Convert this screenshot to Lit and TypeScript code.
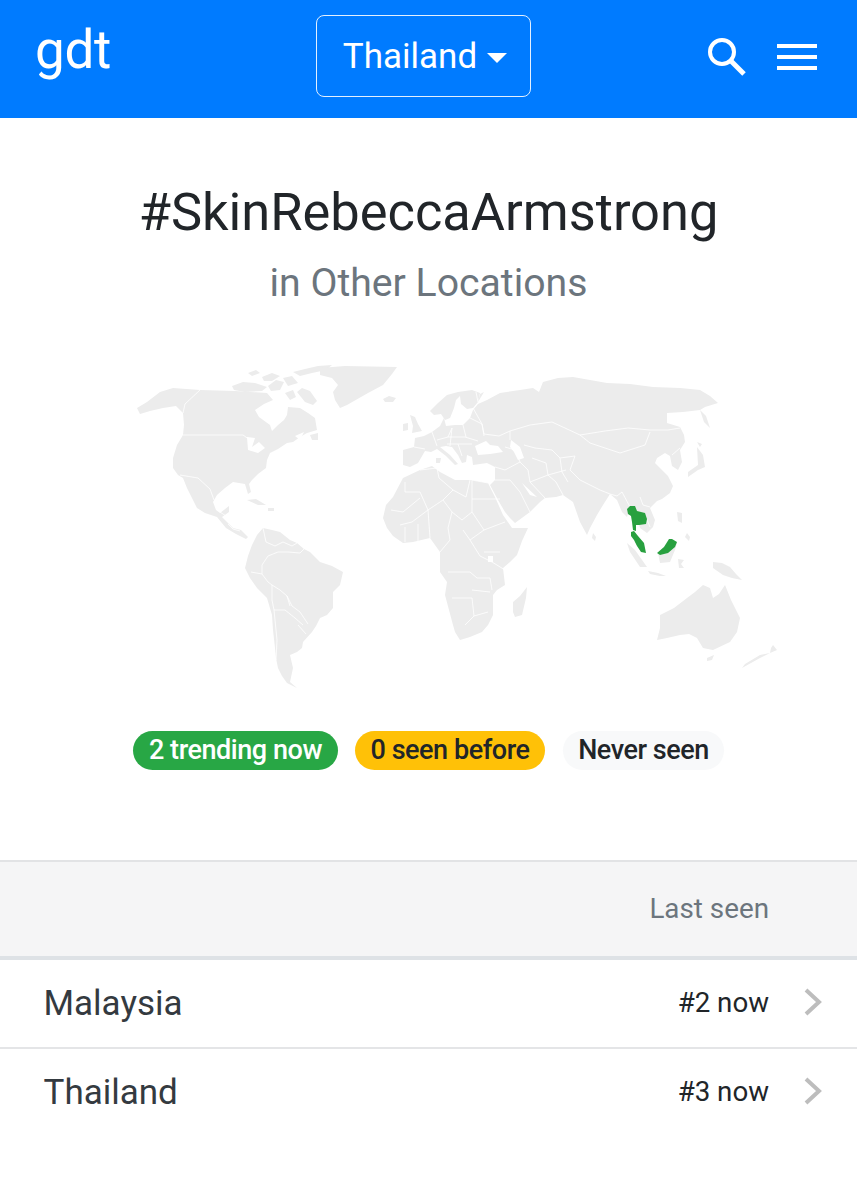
import { LitElement, html, css, svg } from "lit";
import { customElement } from "lit/decorators.js";

const LAND: string[] = [
  // North America
  "137,408 147,402 160,392 173,388 200,390 235,391 267,393 273,400 264,404 255,410 259,417 270,425 272,431 278,425 284,420 287,415 288,407 300,408 308,413 315,418 317,430 307,433 300,437 293,442 287,443 278,449 270,453 267,460 266,468 258,474 252,480 249,484 251,492 248,494 245,484 233,482 225,488 217,495 213,502 216,510 220,513 229,506 229,512 222,517 229,524 233,528 241,530 248,537 246,539 236,534 226,528 217,517 205,513 197,508 192,498 187,488 183,478 178,475 173,468 173,458 177,445 183,435 184,425 183,413 176,406 163,408 150,411 140,414",
  // Arctic islands
  "232,386 243,382 255,383 267,387 262,391 245,392 234,390",
  "268,386 276,380 284,382 280,390 271,391",
  "297,392 302,388 310,391 317,401 313,405 305,402",
  "285,393 293,390 296,397 290,400",
  "262,377 272,373 280,376 272,381 264,381",
  "283,378 292,376 298,383 288,386",
  "293,372 305,369 318,366 332,365 326,370 312,373 300,376",
  "248,373 256,370 260,373 252,376",
  // Greenland
  "320,368 345,366 397,367 392,374 383,385 368,393 347,405 340,408 335,400 333,392 338,385 332,378 320,375",
  // Newfoundland and Caribbean
  "310,435 318,433 318,440 312,440",
  "247,500 256,499 266,505 258,505",
  "268,508 274,508 274,511 268,511",
  // South America
  "252,545 257,535 263,528 272,530 280,532 290,540 297,543 304,549 310,552 320,562 332,566 343,572 340,585 333,592 333,608 327,615 320,618 316,626 312,632 303,642 302,648 297,652 290,655 293,668 290,682 297,688 287,683 282,676 278,668 276,658 275,648 273,630 272,615 267,598 257,588 250,578 245,568 248,556",
  // Africa
  "383,518 386,505 393,497 403,478 420,470 432,466 440,472 455,480 472,480 488,483 495,497 503,515 512,528 528,528 522,541 517,555 510,562 503,568 505,585 497,590 493,595 493,615 488,625 482,632 470,637 460,640 455,632 453,625 449,610 445,595 447,582 440,572 440,552 430,538 413,542 403,543 393,536 387,528",
  // Europe & Asia
  "403,450 414,447 415,438 424,436 432,432 440,426 444,418 446,426 455,425 463,425 470,418 473,410 478,404 487,400 500,393 520,390 533,388 539,392 543,382 558,378 573,377 590,380 607,383 630,384 653,387 680,388 700,390 710,396 718,403 705,407 700,410 683,412 667,413 667,423 680,427 684,435 685,442 680,450 682,462 678,470 672,466 670,456 665,453 657,458 655,463 662,470 668,476 673,486 670,493 662,499 657,501 650,508 655,520 653,527 647,533 640,528 636,514 630,507 627,517 622,512 617,500 610,494 603,505 597,515 590,528 587,535 580,522 573,502 563,495 556,497 545,498 540,502 530,512 515,523 510,518 505,512 498,500 490,485 495,480 495,467 487,463 473,465 472,457 467,455 466,462 462,463 458,455 452,447 446,446 440,447 450,455 458,464 455,465 446,456 437,449 431,452 425,451 418,463 410,467 403,465",
  // Scandinavia
  "430,411 438,403 447,395 458,392 465,391 472,390 480,393 478,402 473,408 467,409 461,404 460,396 456,400 454,408 450,418 445,420 441,414 434,415",
  // Islands of the northern Atlantic and Europe
  "410,415 415,417 418,424 422,431 412,433 413,426",
  "403,424 408,423 408,430 403,431",
  "383,399 389,396 396,398 393,402 385,402",
  "436,458 441,458 440,463 436,463",
  "478,402 480,394 484,392",
  // Madagascar
  "527,587 526,598 522,615 515,617 513,612 513,602 520,596",
  // Australia
  "660,615 674,608 687,598 695,592 703,585 710,588 713,598 719,594 725,585 731,600 740,618 737,632 730,642 713,650 703,648 697,638 689,634 680,635 667,638 657,640 660,628",
  "773,645 777,650 770,653 771,648",
  "770,653 760,658 742,668 745,664 760,655",
  "707,658 714,655 712,660 707,661",
  // Japan
  "697,447 703,455 705,467 698,470 688,477 688,472 698,465",
  "697,442 702,444 700,447",
  "700,410 706,416 710,428 704,422",
  // South-east Asia
  "658,553 670,541 677,543 675,550 670,562 660,563",
  "627,543 635,550 647,567 640,567 630,552",
  "648,571 658,573 666,576 660,576 650,574",
  "678,559 684,560 681,564 684,568 679,568",
  "677,512 682,513 682,523 678,521",
  "687,533 690,537 689,541 685,537",
  "713,562 722,563 730,567 736,574 742,580 732,578 723,575 713,568",
  "593,533 596,537 595,541 592,538",
];

const WATER: string[] = [
  "475,446 486,441 490,445 498,446 503,452 490,454 478,455",
  "511,440 520,447 524,458 518,460 514,452 510,447",
  "522,483 537,497 530,495",
  "247,437 255,438 252,447 259,442 265,448 258,453 248,450",
  "295,436 304,432 300,440",
  "488,556 493,556 493,562 488,562",
];

const BORDERS: string[] = [
  "200,390 185,404 183,413",
  "183,435 243,435 250,440",
  "180,475 198,478 210,489 214,500",
  "220,512 226,516",
  "228,524 233,529 240,531",
  // South America
  "263,528 266,542 275,546 283,542 292,546 297,543",
  "304,549 300,553 288,552 278,552 268,556 262,565 262,574 251,572",
  "262,574 268,582 272,585 280,590 287,596 292,606 300,612 308,624",
  "272,585 272,600 274,610 275,620 277,640 276,660",
  "274,610 285,610 295,618 303,625",
  "287,596 290,606",
  "298,625 306,634",
  // Africa
  "420,470 437,468 439,478 453,490 466,497 470,480",
  "405,482 405,492 420,492 428,510 443,500 453,490",
  "488,483 472,480 472,499 500,499",
  "391,510 403,512 420,498",
  "400,525 412,522 428,510 430,538",
  "405,527 405,542",
  "418,524 418,541",
  "443,500 452,512 448,528 450,540 440,552",
  "472,499 472,512 462,520 452,512",
  "472,512 484,530 505,522",
  "484,530 470,540 463,530",
  "470,540 480,556 492,562 505,570",
  "448,572 470,572 477,578 490,578 492,590",
  "452,598 472,598 474,616 465,625",
  "472,590 490,592",
  "474,616 488,612",
  "484,552 500,552",
  // Middle East
  "495,467 505,470 520,462 528,470 530,482 545,498",
  "495,480 510,480 520,492 530,512",
  "520,462 515,450 505,447",
  "530,482 548,475 556,482 563,495",
  "548,475 546,463 532,458",
  // Europe
  "414,447 425,449",
  "432,432 437,446",
  "437,440 448,437 452,428",
  "452,428 450,446",
  "448,437 465,437 478,441",
  "463,425 466,437",
  "470,418 482,424 484,436",
  "447,444 472,444",
  "458,444 462,456",
  "478,402 476,392",
  // Russia / Central Asia
  "473,408 482,424 484,434 499,436 510,431 530,425 552,422 580,435 605,431 628,428 650,430 668,430 680,428",
  "510,431 510,440",
  "524,445 535,448 552,450 560,458 575,456",
  "580,435 590,443 620,453 645,445 650,432",
  "575,456 570,470 580,480 600,490 610,494",
  "560,458 562,472 568,482",
  "548,475 566,470",
  "610,494 617,496 622,492 630,507",
  "640,497 643,505 650,507",
  "636,514 645,515 650,527",
  "672,455 680,448",
];

const GREEN: string[] = [
  "627,509 630,506 635,506 637,511 645,513 647,519 646,524 639,525 636,525 636,531 633,530 632,522 631,516 628,514",
  "631,532 634,531 638,536 644,543 646,553 641,552 637,546 634,540 631,536",
  "657,553 664,547 669,539 672,539 677,542 675,547 668,553 660,555",
];

const poly = (p: string) => svg`<polygon points=${p}></polygon>`;
const line = (p: string) => svg`<polyline points=${p}></polyline>`;

@customElement("app-root")
export class AppRoot extends LitElement {
  static styles = css`
    :host { display: block; width: 857px; height: 1200px; background: #fff; font-family: Roboto, "Liberation Sans", sans-serif; overflow: hidden; }
    header { height: 118px; background: #007bff; color: #fff; display: grid; grid-template-columns: 281px 215px 1fr; align-items: start; padding: 0 40px 0 35px; box-sizing: border-box; }
    .brand { font-size: 53px; line-height: 57px; padding-top: 22px; font-weight: 400; letter-spacing: -0.3px; }
    .picker { margin-top: 15px; width: 215px; height: 82px; box-sizing: border-box; border: 1.5px solid #e3f0ff; border-radius: 8px; display: flex; align-items: center; justify-content: center; gap: 10px; font-size: 35px; padding-left: 3px; }
    .caret { width: 0; height: 0; border-left: 10px solid transparent; border-right: 10px solid transparent; border-top: 10px solid #fff; margin-top: 4px; }
    .tools { display: flex; justify-content: flex-end; align-items: center; gap: 31px; padding-top: 37px; }
    .tools svg { display: block; }
    .title { margin: 0; padding-top: 60px; text-align: center; font-size: 52.4px; line-height: 68px; font-weight: 400; color: #212529; }
    .sub { margin: 0; padding-top: 14px; text-align: center; font-size: 39.2px; line-height: 46px; font-weight: 400; color: #6c757d; }
    .map { display: block; width: 857px; height: 345px; margin-top: 49px; filter: blur(0.4px); }
    .land { fill: #ececec; stroke: none; }
    .water { fill: #fff; stroke: none; }
    .borders { fill: none; stroke: #fff; stroke-width: 0.8; stroke-linejoin: round; }
    .hit { fill: #28a03f; stroke: none; }
    .pills { display: flex; justify-content: flex-start; gap: 17px; padding: 31px 0 0 133px; }
    .pill { height: 39px; padding-bottom: 2px; border-radius: 20px; box-sizing: border-box; display: flex; align-items: center; justify-content: center; font-size: 27px; font-weight: 500; letter-spacing: -0.45px; }
    .p1 { width: 205px; background: #28a745; color: #fff; }
    .p2 { width: 190px; background: #ffc107; color: #212529; }
    .p3 { width: 161px; margin-left: 1px; background: #f8f9fa; color: #212529; }
    .thead { margin-top: 90px; height: 100px; box-sizing: border-box; background: #f5f5f6; border-top: 2px solid #e2e3e5; border-bottom: 4px solid #dee2e6; display: flex; justify-content: flex-end; align-items: center; padding: 0 88px 2px 0; font-size: 27.8px; color: #6c757d; }
    .row { height: 89px; box-sizing: border-box; display: flex; align-items: center; padding: 0 35px 0 43.5px; border-bottom: 2px solid #e4e5e7; }
    .row.last { height: 87px; border-bottom: 0; }
    .name { flex: 1; font-size: 35px; color: #343a40; }
    .rank { font-size: 27.7px; color: #212529; margin: 0 35px 2px 0; }
    .chev { display: block; margin-bottom: 4px; }
  `;

  private chevron() {
    return html`<svg class="chev" width="18" height="28" viewBox="0 0 18 28" fill="none" stroke="#bdbdbd" stroke-width="4"><path d="M2 2 L15 14 L2 26"></path></svg>`;
  }

  render() {
    return html`
      <header>
        <div class="brand">gdt</div>
        <div class="picker"><span>Thailand</span><span class="caret"></span></div>
        <div class="tools">
          <svg width="39" height="39" viewBox="0 0 39 39" fill="none" stroke="#fff"><circle cx="15" cy="15" r="12" stroke-width="4"></circle><path d="M23.5 23.5 L37 37" stroke-width="5"></path></svg>
          <svg width="40" height="26" viewBox="0 0 40 26" fill="#fff"><rect x="0" y="0" width="40" height="4"></rect><rect x="0" y="11" width="40" height="4"></rect><rect x="0" y="22" width="40" height="4"></rect></svg>
        </div>
      </header>
      <h1 class="title">#SkinRebeccaArmstrong</h1>
      <h2 class="sub">in Other Locations</h2>
      <svg class="map" viewBox="0 355 857 345" aria-label="World map">
        <g class="land">${LAND.map(poly)}</g>
        <g class="water">${WATER.map(poly)}</g>
        <g class="borders">${BORDERS.map(line)}</g>
        <g class="hit">${GREEN.map(poly)}</g>
      </svg>
      <div class="pills">
        <span class="pill p1">2 trending now</span>
        <span class="pill p2">0 seen before</span>
        <span class="pill p3">Never seen</span>
      </div>
      <div class="thead">Last seen</div>
      <div class="row"><span class="name">Malaysia</span><span class="rank">#2 now</span>${this.chevron()}</div>
      <div class="row last"><span class="name">Thailand</span><span class="rank">#3 now</span>${this.chevron()}</div>
    `;
  }
}
